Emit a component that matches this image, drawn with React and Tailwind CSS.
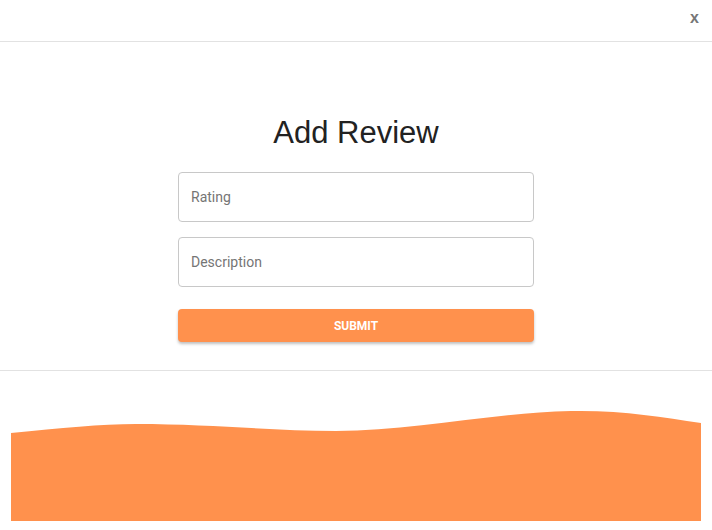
export default function App() {
  return (
    <div className="w-[712px] h-[530px] bg-white overflow-hidden font-['Roboto',sans-serif]">
      {/* header */}
      <div className="h-[42px] border-b border-[#e2e2e2] flex items-start justify-end pr-[13px] pt-[7px]">
        <button className="text-[16px] font-bold text-[#777] font-['Liberation_Sans',Arial,sans-serif] leading-none mt-[3px]">x</button>
      </div>

      {/* body */}
      <div className="h-[329px] border-b border-[#e2e2e2] flex flex-col items-center pt-[73px]">
        <h2 className="text-[31px] leading-[36px] text-[#222] font-['Liberation_Sans',Arial,sans-serif]">Add Review</h2>
        <div className="w-[356px] mt-[21px] flex flex-col">
          <input
            placeholder="Rating"
            className="h-[50px] border border-[#c8c8c8] rounded-[4px] px-[12px] text-[14px] text-[#333] placeholder:text-[#757575] outline-none"
          />
          <input
            placeholder="Description"
            className="h-[50px] mt-[15px] border border-[#c8c8c8] rounded-[4px] px-[12px] text-[14px] text-[#333] placeholder:text-[#757575] outline-none"
          />
          <button className="h-[33px] mt-[22px] bg-[#ff914d] rounded-[4px] text-white text-[12px] font-bold shadow-[0_2px_3px_rgba(0,0,0,0.25)]">
            SUBMIT
          </button>
        </div>
      </div>

      {/* wave footer */}
      <div className="px-[11px] pt-[39px]">
        <svg width="690" height="111" viewBox="0 0 690 111" className="block">
          <path
            d="M0,23 C50,18 90,14 125,14 C200,14 260,21 325,21 C400,21 480,3 560,1 C610,0 650,7 690,13 L690,111 L0,111 Z"
            fill="#ff914d"
          />
        </svg>
      </div>
    </div>
  )
}
